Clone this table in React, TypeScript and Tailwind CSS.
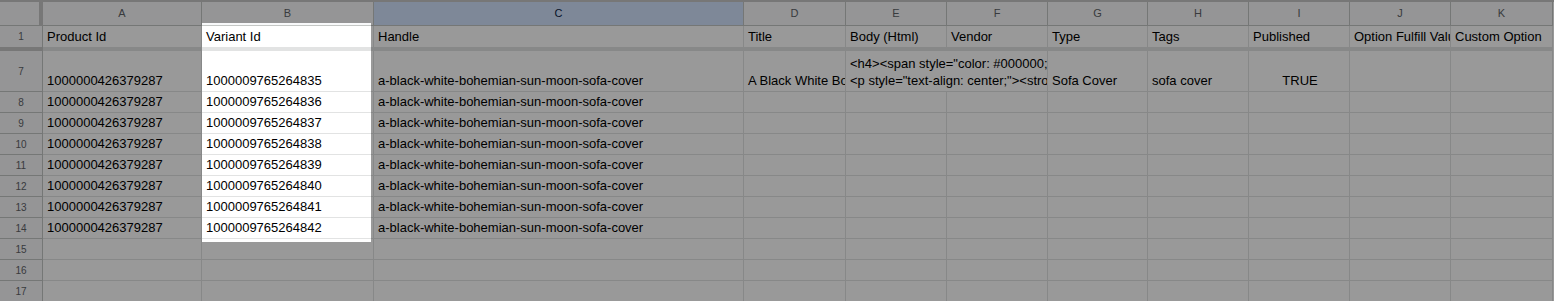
import React from "react";

const HEADERS = [
  "Product Id",
  "Variant Id",
  "Handle",
  "Title",
  "Body (Html)",
  "Vendor",
  "Type",
  "Tags",
  "Published",
  "Option Fulfill Value",
  "Custom Option",
];

const LETTERS = ["A", "B", "C", "D", "E", "F", "G", "H", "I", "J", "K"];

const PRODUCT_ID = "1000000426379287";
const HANDLE = "a-black-white-bohemian-sun-moon-sofa-cover";

const variants = [
  { row: 8, id: "1000009765264836" },
  { row: 9, id: "1000009765264837" },
  { row: 10, id: "1000009765264838" },
  { row: 11, id: "1000009765264839" },
  { row: 12, id: "1000009765264840" },
  { row: 13, id: "1000009765264841" },
  { row: 14, id: "1000009765264842" },
];

const bodyLines = [
  '<h4><span style="color: #000000;"><strong>Bohemian Sun Moon</strong></span></h4>',
  '<p style="text-align: center;"><strong>Fits most sofas</strong></p>',
  '<h4 class="product-title" style="text-align: center;">',
];

const gridCols =
  "grid grid-cols-[43px_159px_172px_370px_102px_101px_101px_100px_101px_101px_101px_102px]";

const Cell = ({
  children,
  className = "",
}: {
  children?: React.ReactNode;
  className?: string;
}) => (
  <div
    className={`flex items-end overflow-hidden whitespace-nowrap border-r border-b border-r-[#e2e3e3] border-b-[#e2e3e3] pl-[4px] pr-[2px] pb-[2px] text-[13px] leading-[17px] text-black ${className}`}
  >
    {children}
  </div>
);

const RowNumber = ({ n, className = "" }: { n: number; className?: string }) => (
  <div
    className={`flex items-center justify-center border-r border-b border-r-[#c4c7c5] border-b-[#c4c7c5] bg-[#f8f9fa] text-[10px] text-[#5f6368] ${className}`}
  >
    {n}
  </div>
);

const EmptyRow = ({ n }: { n: number }) => (
  <div className={`${gridCols} h-[21px]`}>
    <RowNumber n={n} />
    {LETTERS.map((l) => (
      <Cell key={l} />
    ))}
  </div>
);

const VariantRow = ({ row, id }: { row: number; id: string }) => (
  <div className={`${gridCols} h-[21px]`}>
    <RowNumber n={row} />
    <Cell>{PRODUCT_ID}</Cell>
    <Cell>{id}</Cell>
    <Cell>{HANDLE}</Cell>
    {LETTERS.slice(3).map((l) => (
      <Cell key={l} />
    ))}
  </div>
);

export default function App() {
  return (
    <div className="relative h-[301px] w-[1554px] overflow-hidden bg-white font-['Liberation_Sans',Arial,sans-serif]">
      <div className="border-t-2 border-[#c7c7c7]">
        {/* column letters */}
        <div className={`${gridCols} h-[24px]`}>
          <div className="border-r-4 border-b border-r-[#c7c7c7] border-b-[#c4c7c5] bg-[#f8f9fa]" />
          {LETTERS.map((l) => (
            <div
              key={l}
              className={`flex items-center justify-center border-r border-b border-r-[#c4c7c5] border-b-[#c4c7c5] text-[11px] ${
                l === "C" ? "bg-[#d3e3fd] text-[#0b1f47]" : "bg-[#f8f9fa] text-[#5f6368]"
              }`}
            >
              {l}
            </div>
          ))}
        </div>

        {/* frozen header row */}
        <div className={`${gridCols} h-[25px]`}>
          <RowNumber n={1} className="border-b-4 border-b-[#c7c7c7]" />
          {HEADERS.map((h) => (
            <Cell key={h} className="border-b-4 border-b-[#c7c7c7]">
              {h}
            </Cell>
          ))}
        </div>

        {/* first variant, tall row with wrapped body */}
        <div className={`${gridCols} h-[41px]`}>
          <RowNumber n={7} />
          <Cell>{PRODUCT_ID}</Cell>
          <Cell>1000009765264835</Cell>
          <Cell>{HANDLE}</Cell>
          <Cell>A Black White Bohemian Sun Moon Sofa Cover</Cell>
          {/* body spills over the empty Vendor cell, so no divider between them */}
          <div className="border-b border-b-[#e2e3e3]">
            <div className="h-[40px] w-[201px] overflow-hidden pl-[4px] pt-[4px] text-[13px] leading-[17px] text-black">
              {bodyLines.map((line) => (
                <div key={line} className="whitespace-nowrap">
                  {line}
                </div>
              ))}
            </div>
          </div>
          <Cell />
          <Cell>Sofa Cover</Cell>
          <Cell>sofa cover</Cell>
          <Cell className="justify-center pl-0">TRUE</Cell>
          <Cell />
          <Cell />
        </div>

        {variants.map((v) => (
          <VariantRow key={v.row} row={v.row} id={v.id} />
        ))}

        {[15, 16, 17].map((n) => (
          <EmptyRow key={n} n={n} />
        ))}
      </div>

      {/* spotlight on the Variant Id column */}
      <div className="pointer-events-none absolute left-[202px] top-[23px] h-[219px] w-[169px] shadow-[0_0_0_2000px_rgba(0,0,0,0.4)]" />
    </div>
  );
}
